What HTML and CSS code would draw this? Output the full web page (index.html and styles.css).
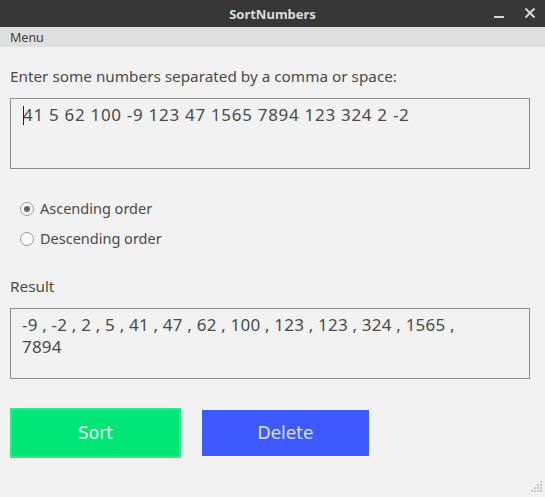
FILE: index.html
```html
<!DOCTYPE html>
<html>
<head>
<meta charset="utf-8">
<link rel="stylesheet" href="styles.css">
</head>
<body>
<div class="window">
  <div class="titlebar">
    <span class="title">SortNumbers</span>
    <div class="controls">
      <svg class="minimize" width="12" height="12" viewBox="0 0 12 12"><rect x="1" y="9" width="10" height="2" fill="#d6d6d6"/></svg>
      <svg class="close" width="12" height="12" viewBox="0 0 12 12"><path d="M1.5 1.5 L10.5 10.5 M10.5 1.5 L1.5 10.5" stroke="#d6d6d6" stroke-width="2" fill="none"/></svg>
    </div>
  </div>
  <div class="menubar"><span class="menu">Menu</span></div>
  <div class="content">
    <div class="label prompt">Enter some numbers separated by a comma or space:</div>
    <div class="box input"><span class="caret"></span>41 5 62 100 -9 123 47 1565 7894 123 324 2 -2</div>
    <div class="radios">
      <label class="radio"><span class="dot checked"></span>Ascending order</label>
      <label class="radio"><span class="dot"></span>Descending order</label>
    </div>
    <div class="label result-label">Result</div>
    <div class="box output">-9 , -2 , 2 , 5 , 41 , 47 , 62 , 100 , 123 , 123 , 324 , 1565 ,<br>7894</div>
    <div class="buttons">
      <button class="btn sort">Sort</button>
      <button class="btn delete">Delete</button>
    </div>
  </div>
  <svg class="grip" width="16" height="16" viewBox="0 0 16 16">
    <g fill="#c8c8c8">
      <rect x="13" y="1" width="2" height="2"/>
      <rect x="10" y="4" width="2" height="2"/><rect x="13" y="4" width="2" height="2"/>
      <rect x="7" y="7" width="2" height="2"/><rect x="10" y="7" width="2" height="2"/><rect x="13" y="7" width="2" height="2"/>
      <rect x="4" y="10" width="2" height="2"/><rect x="7" y="10" width="2" height="2"/><rect x="10" y="10" width="2" height="2"/><rect x="13" y="10" width="2" height="2"/>
    </g>
  </svg>
</div>
</body>
</html>
```
FILE: styles.css
```css
html, body {
  margin: 0;
  padding: 0;
  background: #f2f2f2;
}
body {
  font-family: "Noto Sans", "DejaVu Sans", sans-serif;
  color: #4a4a4a;
}
.window {
  position: relative;
  width: 545px;
  height: 497px;
  background: #f2f2f2;
  overflow: hidden;
}
.titlebar {
  height: 27px;
  background: #373737;
  display: flex;
  align-items: center;
  justify-content: center;
  position: relative;
}
.title {
  color: #dcdcdc;
  font-weight: bold;
  font-size: 13px;
}
.controls {
  position: absolute;
  right: 9px;
  top: 7px;
  display: flex;
  gap: 19px;
}
.menubar {
  height: 20px;
  background: #dfdfdf;
  display: flex;
  align-items: center;
  padding-left: 10px;
}
.menu {
  font-size: 12.5px;
  color: #3c3c3c;
}
.content {
  padding: 0 15px 0 10px;
}
.label {
  font-size: 15.3px;
  line-height: 18px;
}
.prompt {
  margin-top: 20px;
}
.box {
  box-sizing: border-box;
  height: 71px;
  border: 1px solid #8c8c8c;
  font-size: 17px;
  line-height: 22px;
  padding: 5px 12px;
  color: #4a4a4a;
}
.input {
  margin-top: 13px;
  position: relative;
  letter-spacing: 0.7px;
}
.caret {
  position: absolute;
  left: 12px;
  top: 7px;
  width: 1px;
  height: 19px;
  background: #222;
}
.radios {
  margin-top: 30px;
  padding-left: 10px;
  display: flex;
  flex-direction: column;
  gap: 11px;
}
.radio {
  display: flex;
  align-items: center;
  font-size: 14.5px;
  line-height: 19px;
  gap: 6px;
}
.dot {
  box-sizing: border-box;
  width: 14px;
  height: 14px;
  border: 1px solid #9a9a9a;
  border-radius: 50%;
  background: #fafafa;
  position: relative;
}
.dot.checked::after {
  content: "";
  position: absolute;
  left: 3px;
  top: 3px;
  width: 6px;
  height: 6px;
  border-radius: 50%;
  background: #666;
}
.result-label {
  margin-top: 29px;
}
.output {
  margin-top: 13px;
  padding-left: 11px;
  letter-spacing: 0.2px;
}
.buttons {
  margin-top: 29px;
  display: flex;
  align-items: center;
  gap: 21px;
}
.btn {
  font-family: "DejaVu Sans", sans-serif;
  font-size: 17px;
  color: #e6eef2;
  border: none;
  padding: 0;
  cursor: pointer;
}
.sort {
  width: 171px;
  height: 50px;
  background: #00e676;
  border: 2px solid #2ee88a;
  box-sizing: border-box;
}
.delete {
  width: 167px;
  height: 46px;
  background: #3d5afe;
  color: #dce0ff;
}
.grip {
  position: absolute;
  right: 2px;
  bottom: 1px;
}
```
